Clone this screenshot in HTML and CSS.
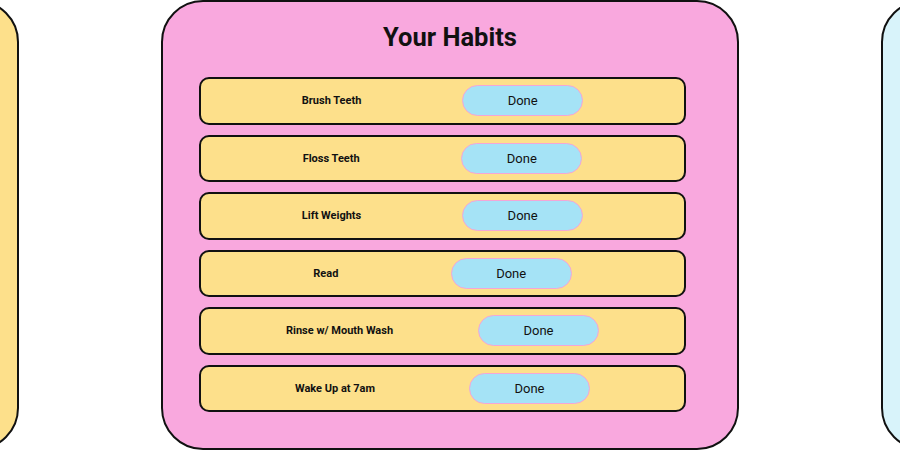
FILE: index.html
```html
<!DOCTYPE html>
<html lang="en">
<head>
<meta charset="utf-8">
<title>Your Habits</title>
<link rel="stylesheet" href="styles.css">
</head>
<body>
<main class="carousel">
  <section class="card card-yellow"></section>
  <section class="card card-pink">
    <h1 class="title">Your Habits</h1>
    <ul class="habits">
      <li class="habit"><span class="habit-name">Brush Teeth</span><button class="done">Done</button></li>
      <li class="habit"><span class="habit-name">Floss Teeth</span><button class="done">Done</button></li>
      <li class="habit"><span class="habit-name">Lift Weights</span><button class="done">Done</button></li>
      <li class="habit"><span class="habit-name">Read</span><button class="done">Done</button></li>
      <li class="habit"><span class="habit-name">Rinse w/ Mouth Wash</span><button class="done">Done</button></li>
      <li class="habit"><span class="habit-name">Wake Up at 7am</span><button class="done">Done</button></li>
    </ul>
  </section>
  <section class="card card-blue"></section>
</main>
</body>
</html>
```

FILE: styles.css
```css
* { box-sizing: border-box; }

html, body {
  margin: 0;
  padding: 0;
  background: #ffffff;
  font-family: Roboto, "Liberation Sans", Arial, sans-serif;
  color: #111111;
}

.carousel {
  width: 900px;
  height: 450px;
  overflow: hidden;
  display: flex;
  justify-content: center;
  align-items: flex-start;
  gap: 142px;
}

.card {
  flex: 0 0 578px;
  height: 450px;
  border: 2px solid #111111;
  border-radius: 42px;
}

.card-yellow { background: #fde08b; }
.card-blue { background: #d8f3fa; }

.card-pink {
  background: #f9a8de;
  padding: 20px 51px 0 36px;
  display: flex;
  flex-direction: column;
}

.title {
  margin: 0 -15px 24px 0;
  font-size: 25.5px;
  line-height: 31px;
  font-weight: 700;
  text-align: center;
  color: #111111;
}

.habits {
  list-style: none;
  margin: 0;
  padding: 0;
  display: flex;
  flex-direction: column;
  gap: 10px;
}

.habit {
  height: 47.5px;
  border: 2px solid #111111;
  border-radius: 10px;
  background: #fde08b;
  display: flex;
  align-items: center;
  justify-content: space-evenly;
}

.habit-name {
  font-size: 11px;
  font-weight: 700;
  color: #111111;
}

.done {
  width: 121px;
  height: 31px;
  border: 1px solid #f4a6d6;
  border-radius: 16px;
  background: #a5e3f6;
  font-family: Roboto, "Liberation Sans", Arial, sans-serif;
  font-size: 13px;
  color: #111111;
  padding: 0;
}
```
